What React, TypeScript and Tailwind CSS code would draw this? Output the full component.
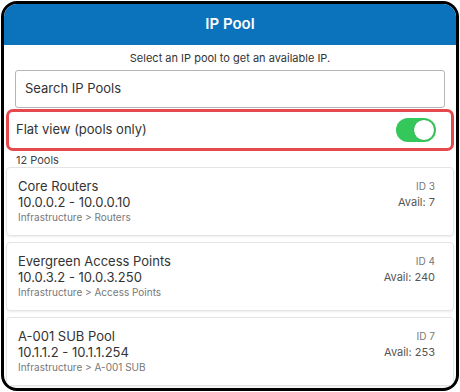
import React from 'react';

const pools = [
  { name: 'Core Routers', range: '10.0.0.2 - 10.0.0.10', path: 'Infrastructure > Routers', id: 3, avail: 7 },
  { name: 'Evergreen Access Points', range: '10.0.3.2 - 10.0.3.250', path: 'Infrastructure > Access Points', id: 4, avail: 240 },
  { name: 'A-001 SUB Pool', range: '10.1.1.2 - 10.1.1.254', path: 'Infrastructure > A-001 SUB', id: 7, avail: 253 },
];

const Toggle: React.FC = () => (
  <div className="w-[40px] h-[24px] rounded-full bg-[#34c759] flex items-center justify-end p-px">
    <div className="w-[22px] h-[22px] rounded-full bg-white border border-[#2fb552]" />
  </div>
);

const App: React.FC = () => {
  return (
    <div className="w-[460px] h-[392px] bg-white p-px font-['Inter','Liberation_Sans',sans-serif]">
      <div className="h-full rounded-[16px] border-[3px] border-black overflow-hidden flex flex-col bg-white">
        {/* header */}
        <div className="h-[41px] shrink-0 bg-[#0b72bc] flex items-center justify-center text-white text-[15px] font-semibold">
          IP Pool
        </div>

        <div className="flex flex-col px-[2px]">
          <p className="text-[11px] leading-[16px] text-[#333] text-center mt-[5px]">
            Select an IP pool to get an available IP.
          </p>

          <div className="mx-[9px] mt-[4px] h-[38px] rounded-[3px] border border-[#b5b5b5] flex items-center px-[9px] text-[13px] text-[#333]">
            Search IP Pools
          </div>

          {/* flat view */}
          <div className="mt-px h-[42px] rounded-[7px] border-[3px] border-[#e5484d] flex items-center justify-between pl-[7px] pr-[15px]">
            <span className="text-[13px] text-[#333]">Flat view (pools only)</span>
            <Toggle />
          </div>

          <div className="pl-[10px] pt-[2px] text-[11px] leading-[14px] text-[#444]">12 Pools</div>

          <div className="flex flex-col gap-[6px]">
            {pools.map((p) => (
              <div
                key={p.id}
                className="h-[69px] rounded-[4px] border border-[#e4e4e4] shadow-[0_1px_2px_rgba(0,0,0,0.08)] flex justify-between pt-[10px] pl-[11px] pr-[18px]"
              >
                <div className="flex flex-col">
                  <span className="text-[13px] leading-[17px] text-[#333]">{p.name}</span>
                  <span className="text-[13px] leading-[15px] text-[#333]">{p.range}</span>
                  <span className="text-[10px] leading-[15px] text-[#777]">{p.path}</span>
                </div>
                <div className="flex flex-col items-end">
                  <span className="text-[10px] leading-[17px] text-[#777]">ID {p.id}</span>
                  <span className="text-[11px] leading-[15px] text-[#555]">Avail: {p.avail}</span>
                </div>
              </div>
            ))}
          </div>
        </div>
      </div>
    </div>
  );
};

export default App;
